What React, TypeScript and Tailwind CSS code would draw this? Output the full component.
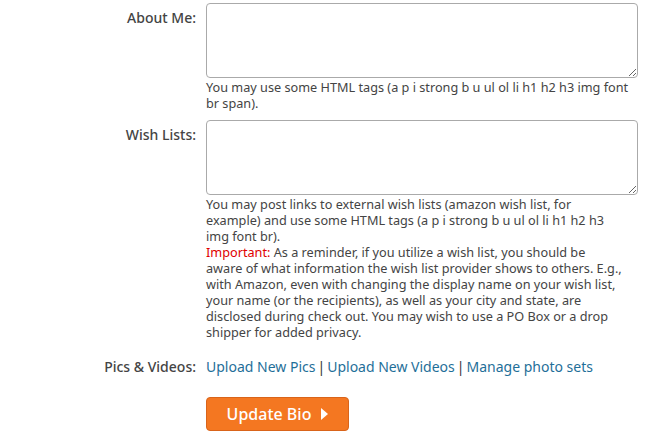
const Row = ({ label, children, labelPad = "pt-[4px]" }: { label: string; children: React.ReactNode; labelPad?: string }) => (
  <div className="flex gap-[10px]">
    <div className={`w-[196px] shrink-0 text-right text-[14px] font-medium text-[#444] ${labelPad}`}>{label}</div>
    <div className="w-[432px]">{children}</div>
  </div>
);

const Sep = () => <span className="mx-[2px] text-[#333]">|</span>;

export default function App() {
  return (
    <div className="min-h-[439px] bg-white pt-[3px] font-['Noto_Sans',sans-serif] text-[#444]">
      <Row label="About Me:">
        <textarea className="block h-[75px] w-[432px] rounded-[4px] border border-[#aaa] bg-white" />
        <p className="mt-[1px] text-[12.7px] leading-[16px]">
          You may use some HTML tags (a p i strong b u ul ol li h1 h2 h3 img font
          <br />
          br span).
        </p>
      </Row>
      <div className="mt-[9px]">
        <Row label="Wish Lists:">
          <textarea className="block h-[75px] w-[432px] rounded-[4px] border border-[#aaa] bg-white" />
          <p className="mt-[1px] text-[12.7px] leading-[16px]">
            You may post links to external wish lists (amazon wish list, for
            <br />
            example) and use some HTML tags (a p i strong b u ul ol li h1 h2 h3
            <br />
            img font br).
            <br />
            <span className="text-[#e00000]">Important:</span> As a reminder, if you utilize a wish list, you should be
            <br />
            aware of what information the wish list provider shows to others. E.g.,
            <br />
            with Amazon, even with changing the display name on your wish list,
            <br />
            your name (or the recipients), as well as your city and state, are
            <br />
            disclosed during check out. You may wish to use a PO Box or a drop
            <br />
            shipper for added privacy.
          </p>
        </Row>
      </div>
      <div className="mt-[16px]">
        <Row label="Pics & Videos:" labelPad="">
          <div className="text-[14px]">
            <a href="#" className="text-[#1f6f99]">Upload New Pics</a>
            <Sep />
            <a href="#" className="text-[#1f6f99]">Upload New Videos</a>
            <Sep />
            <a href="#" className="text-[#1f6f99]">Manage photo sets</a>
          </div>
          <button className="mt-[20px] flex h-[34px] w-[143px] items-center justify-center gap-[10px] rounded-[4px] border border-[#d9641a] bg-[#f47721] text-[16px] font-medium text-white">
            Update Bio
            <svg width="7" height="12" viewBox="0 0 7 12"><path d="M0 0 L7 6 L0 12 Z" fill="white" /></svg>
          </button>
        </Row>
      </div>
    </div>
  );
}
